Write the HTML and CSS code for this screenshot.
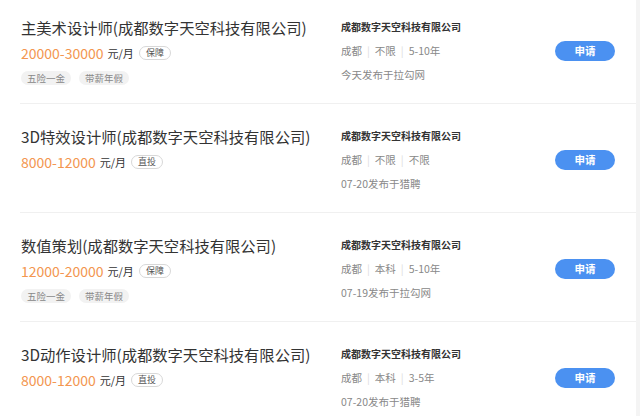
FILE: index.html
```html
<!DOCTYPE html>
<html>
<head lang="zh">
    <meta charset="UTF-8">
    <title>职位列表</title>
    <link rel="stylesheet" href="styles.css">
</head>
<body>
    <div class="list">
        <div class="job">
            <div class="left">
                <h3 class="title">主美术设计师(成都数字天空科技有限公司)</h3>
                <p class="pay"><span class="salary">20000-30000</span> <span class="unit">元/月</span> <span class="badge">保障</span></p>
                <p class="tags"><span>五险一金</span><span>带薪年假</span></p>
            </div>
            <div class="right">
                <h4 class="company">成都数字天空科技有限公司</h4>
                <p class="meta">成都<i>|</i>不限<i>|</i>5-10年</p>
                <p class="date">今天发布于拉勾网</p>
            </div>
            <a class="apply" href="#">申请</a>
        </div>
        <div class="job">
            <div class="left">
                <h3 class="title">3D特效设计师(成都数字天空科技有限公司)</h3>
                <p class="pay"><span class="salary">8000-12000</span> <span class="unit">元/月</span> <span class="badge">直投</span></p>
            </div>
            <div class="right">
                <h4 class="company">成都数字天空科技有限公司</h4>
                <p class="meta">成都<i>|</i>不限<i>|</i>不限</p>
                <p class="date">07-20发布于猎聘</p>
            </div>
            <a class="apply" href="#">申请</a>
        </div>
        <div class="job">
            <div class="left">
                <h3 class="title">数值策划(成都数字天空科技有限公司)</h3>
                <p class="pay"><span class="salary">12000-20000</span> <span class="unit">元/月</span> <span class="badge">保障</span></p>
                <p class="tags"><span>五险一金</span><span>带薪年假</span></p>
            </div>
            <div class="right">
                <h4 class="company">成都数字天空科技有限公司</h4>
                <p class="meta">成都<i>|</i>本科<i>|</i>5-10年</p>
                <p class="date">07-19发布于拉勾网</p>
            </div>
            <a class="apply" href="#">申请</a>
        </div>
        <div class="job">
            <div class="left">
                <h3 class="title">3D动作设计师(成都数字天空科技有限公司)</h3>
                <p class="pay"><span class="salary">8000-12000</span> <span class="unit">元/月</span> <span class="badge">直投</span></p>
            </div>
            <div class="right">
                <h4 class="company">成都数字天空科技有限公司</h4>
                <p class="meta">成都<i>|</i>本科<i>|</i>3-5年</p>
                <p class="date">07-20发布于猎聘</p>
            </div>
            <a class="apply" href="#">申请</a>
        </div>
    </div>
</body>
</html>
```

FILE: styles.css
```css
* {
    padding: 0;
    margin: 0;
    box-sizing: border-box;
}
html {
    background-color: #f4f4f4;
}
body {
    width: 636px;
    height: 416px;
    overflow: hidden;
    background-color: #fff;
    font-family: "Noto Sans CJK SC", "Noto Sans", sans-serif;
    color: #333;
}
.list {
    margin-top: -5px;
}
.job {
    display: grid;
    grid-template-columns: 320px 1fr auto;
    align-items: start;
    height: 109px;
    margin-left: 20px;
    padding: 21px 21px 0 1px;
    border-bottom: 1px solid #f0f0f0;
}
.title {
    font-size: 15.3px;
    font-weight: normal;
    line-height: 22px;
    color: #333;
}
.pay {
    display: flex;
    align-items: center;
    height: 20px;
    margin-top: 5px;
}
.salary {
    font-size: 14px;
    color: #f39650;
}
.unit {
    font-size: 11px;
    color: #333;
    margin-left: 4px;
}
.badge {
    height: 14px;
    line-height: 12px;
    padding: 0 6px;
    margin-left: 5px;
    font-size: 9px;
    color: #555;
    border: 1px solid #d8d8d8;
    border-radius: 7px;
}
.tags {
    display: flex;
    gap: 8px;
    margin-top: 8px;
}
.tags span {
    height: 14px;
    line-height: 14px;
    padding: 0 6px;
    font-size: 9.5px;
    color: #888;
    background-color: #f2f2f2;
    border-radius: 7px;
}
.company {
    font-size: 10px;
    font-weight: bold;
    line-height: 22px;
    color: #333;
}
.meta {
    margin-top: 3px;
    font-size: 10.5px;
    line-height: 20px;
    color: #888;
}
.meta i {
    font-style: normal;
    color: #ddd;
    margin: 0 5px;
}
.date {
    margin-top: 4px;
    font-size: 10.5px;
    line-height: 20px;
    color: #888;
}
.apply {
    align-self: center;
    width: 60px;
    height: 20px;
    margin-top: -17px;
    line-height: 20px;
    text-align: center;
    font-size: 10.5px;
    font-weight: bold;
    color: #fff;
    text-decoration: none;
    background-color: #4b91f1;
    border-radius: 10px;
}
```
